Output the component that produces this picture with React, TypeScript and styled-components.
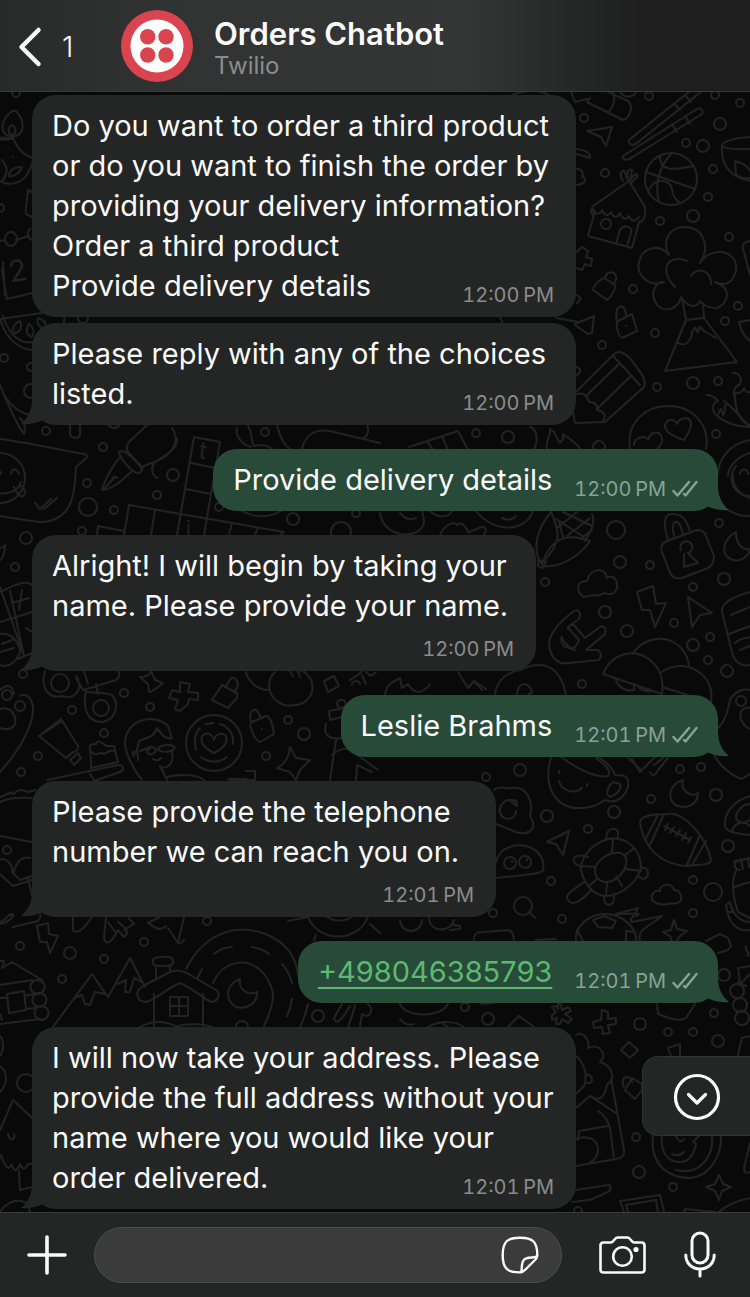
import React from "react";
import styled, { createGlobalStyle, css } from "styled-components";

const GlobalStyle = createGlobalStyle`
  *, *::before, *::after { box-sizing: border-box; }
  body {
    margin: 0;
    background: #090909;
    font-family: Inter, "Liberation Sans", sans-serif;
    color: #fafafa;
  }
`;

const colors = {
  panel: "#242625",
  line: "#3a3c3b",
  sent: "#274a39",
  wallpaper: "#090909",
  doodle: "#222222",
};

const Screen = styled.div`
  display: flex;
  flex-direction: column;
  min-height: 100vh;
`;

/* ---------- header ---------- */

const Header = styled.header`
  display: flex;
  align-items: center;
  height: 92px;
  padding: 0 18px;
  background: linear-gradient(90deg, #282929 0%, #313232 22%, #343535 62%, #252626 77%, #1e1e1e 86%);
  border-bottom: 1px solid #3a3a3a;
`;

const BackButton = styled.button`
  display: flex;
  align-items: center;
  gap: 20px;
  width: 103px;
  padding: 2px 0 0;
  border: 0;
  background: none;
  color: inherit;
  font: 300 29px/40px Inter, "Liberation Sans", sans-serif;
  cursor: pointer;
`;

const Contact = styled.div`
  display: flex;
  align-items: center;
  gap: 21px;
  min-width: 0;
`;

const ContactText = styled.div`
  padding-top: 4px;
`;

const ContactName = styled.h1`
  margin: 0;
  font-size: 31px;
  font-weight: 600;
  line-height: 36px;
  white-space: nowrap;
`;

const ContactStatus = styled.p`
  margin: 0;
  font-size: 24px;
  line-height: 28px;
  color: #8c8c8c;
`;

/* ---------- chat ---------- */

const Chat = styled.main`
  position: relative;
  flex: 1;
  padding: 3px 32px;
  background: ${colors.wallpaper};
  overflow: hidden;
`;

const WallpaperSvg = styled.svg`
  position: absolute;
  inset: 0;
  width: 100%;
  height: 100%;
`;

const MessageList = styled.ol`
  position: relative;
  display: flex;
  flex-direction: column;
  gap: 24px;
  margin: 0;
  padding: 0;
  list-style: none;
`;

const MessageGroup = styled.li`
  display: flex;
  flex-direction: column;
  gap: 6px;
`;

type Side = "received" | "sent";
type MetaPlacement = "corner" | "below" | "beside";

const Bubble = styled.article<{ $side: Side; $width?: number; $meta: MetaPlacement }>`
  position: relative;
  display: grid;
  align-self: ${(p) => (p.$side === "sent" ? "flex-end" : "flex-start")};
  width: ${(p) => (p.$width ? `${p.$width}px` : "auto")};
  max-width: 100%;
  padding: 11px 20px;
  border-radius: 24px;
  background: ${(p) => (p.$side === "sent" ? colors.sent : colors.panel)};
  ${(p) => p.$meta === "below" && css`row-gap: 12px;`}
  ${(p) => p.$meta === "beside" && css`
    grid-auto-flow: column;
    column-gap: 22px;
  `}
  ${(p) => p.$meta === "corner" && css`
    > * { grid-area: 1 / 1; }
  `}
`;

const MessageText = styled.p`
  margin: 0;
  font-size: 29px;
  line-height: 40px;
  white-space: pre-line;
`;

const PhoneLink = styled.a`
  color: #5cb971;
  text-decoration: underline;
  text-decoration-thickness: 2px;
  text-underline-offset: 5px;
  text-decoration-skip-ink: none;
`;

const Meta = styled.div<{ $side: Side }>`
  display: flex;
  align-items: center;
  gap: 6px;
  align-self: end;
  justify-self: end;
  padding-right: ${(p) => (p.$side === "sent" ? "0" : "2px")};
  font-size: 20px;
  font-variant-numeric: tabular-nums;
  line-height: 22px;
  white-space: nowrap;
  color: ${(p) => (p.$side === "sent" ? "#89a294" : "#8b8c8c")};
`;

const Tail = styled.svg<{ $side: Side }>`
  && { grid-area: auto; }
  position: absolute;
  bottom: 0;
  ${(p) => (p.$side === "sent" ? "right: -12px; transform: scaleX(-1);" : "left: -12px;")}
  fill: ${(p) => (p.$side === "sent" ? colors.sent : colors.panel)};
`;

const ScrollDownButton = styled.button`
  position: absolute;
  right: 0;
  bottom: 76px;
  display: flex;
  align-items: center;
  width: 108px;
  height: 80px;
  padding: 2px 0 0 30px;
  border: 1px solid #303231;
  border-right: 0;
  border-radius: 16px 0 0 16px;
  background: ${colors.panel};
  color: #ffffff;
  cursor: pointer;
`;

/* ---------- composer ---------- */

const Composer = styled.form`
  display: flex;
  align-items: center;
  padding: 14px 34px 14px 27px;
  border-top: 1px solid ${colors.line};
  background: ${colors.panel};
`;

const IconButton = styled.button`
  display: flex;
  flex: none;
  padding: 0;
  border: 0;
  background: none;
  color: #fafafa;
  cursor: pointer;
`;

const InputPill = styled.div`
  display: flex;
  flex: 1;
  align-items: center;
  min-width: 0;
  height: 56px;
  margin: 0 37px 0 27px;
  padding: 0 22px 0 24px;
  border: 1px solid #4c4d4d;
  border-radius: 28px;
  background: #3b3b3b;
`;

const MessageInput = styled.input`
  flex: 1;
  min-width: 0;
  border: 0;
  outline: 0;
  background: transparent;
  color: inherit;
  font: 400 29px/40px Inter, "Liberation Sans", sans-serif;
`;

const Tools = styled.div`
  display: flex;
  align-items: center;
  gap: 38px;
`;

/* ---------- icons ---------- */

const ChevronLeft = () => (
  <svg width="24" height="42" viewBox="0 0 24 42" fill="none" stroke="currentColor" strokeWidth="4.500" strokeLinecap="round" strokeLinejoin="round" aria-hidden="true">
    <path d="M20.500 4L3.500 21L20.500 38" />
  </svg>
);

const Avatar = () => (
  <svg width="72" height="72" viewBox="0 0 72 72" role="img" aria-label="Twilio">
    <circle cx="36" cy="36" r="36" fill="#d9444f" />
    <circle cx="36" cy="36" r="26.500" fill="#ffffff" />
    <g fill="#d9444f">
      <circle cx="26.700" cy="26.700" r="7.700" />
      <circle cx="45" cy="26.700" r="7.700" />
      <circle cx="26.700" cy="45" r="7.700" />
      <circle cx="45" cy="45" r="7.700" />
    </g>
  </svg>
);

const DoubleCheck = () => (
  <svg width="26" height="18" viewBox="0 0 26 18" fill="none" stroke="currentColor" strokeWidth="2.400" strokeLinecap="round" strokeLinejoin="round" aria-hidden="true">
    <path d="M1.500 11L5.500 15.500L17 2" />
    <path d="M12 14L13.500 15.500L24.500 2" />
  </svg>
);

const CircleDown = () => (
  <svg width="48" height="48" viewBox="0 0 48 48" fill="none" stroke="currentColor" strokeWidth="3.200" strokeLinecap="round" strokeLinejoin="round" aria-hidden="true">
    <circle cx="24" cy="24" r="21.500" />
    <path d="M15.500 21.500L24 30L32.500 21.500" />
  </svg>
);

const Plus = () => (
  <svg width="40" height="40" viewBox="0 0 40 40" stroke="currentColor" strokeWidth="3.600" strokeLinecap="round" aria-hidden="true">
    <path d="M20 2V38M2 20H38" />
  </svg>
);

const Sticker = () => (
  <svg width="38" height="38" viewBox="0 0 38 38" fill="none" stroke="currentColor" strokeWidth="2.400" strokeLinecap="round" strokeLinejoin="round" aria-hidden="true">
    <path d="M19.500 36.300C6 36.800 1.700 32 1.700 19C1.700 6 6 1.700 19 1.700C32 1.700 36.300 6 36.300 19C36.300 21.500 36 22 34.500 23.500L25 33C23 35 21.500 36.200 19.500 36.300Z" />
    <path d="M20.500 36C20.800 26 21 21.500 31 21.500C33.500 21.500 35 21.200 36 20" />
  </svg>
);

const Camera = () => (
  <svg width="47" height="38" viewBox="0 0 47 38" fill="none" stroke="currentColor" strokeWidth="2.600" strokeLinecap="round" strokeLinejoin="round" aria-hidden="true">
    <path d="M4.500 6.500H12C14.500 6.500 15.500 1.500 18.500 1.500H28.500C31.500 1.500 32.500 6.500 35 6.500H42.500C44.500 6.500 45.500 7.500 45.500 9.500V33.500C45.500 35.500 44.500 36.500 42.500 36.500H4.500C2.500 36.500 1.500 35.500 1.500 33.500V9.500C1.500 7.500 2.500 6.500 4.500 6.500Z" />
    <circle cx="23.500" cy="20.500" r="9.300" />
    <circle cx="37" cy="13.500" r="2.600" fill="currentColor" stroke="none" />
  </svg>
);

const Microphone = () => (
  <svg width="32" height="48" viewBox="0 0 32 48" fill="none" stroke="currentColor" strokeWidth="3" strokeLinecap="round" aria-hidden="true">
    <rect x="8" y="2" width="16" height="30" rx="8" />
    <path d="M1.800 24C1.800 32.500 8 38 16 38C24 38 30.200 32.500 30.200 24M16 38V45" />
  </svg>
);

/* ---------- wallpaper ---------- */

/* Loose dots scattered between the doodles: centre x, centre y, radius. */
const dots: number[][] = [
  [649, 96, 4], [715, 95, 4], [740, 103, 4], [584, 118, 4], [720, 124, 6], [686, 143, 4], [703, 146, 6],
  [605, 173, 4], [713, 169, 4], [708, 197, 4], [693, 216, 6], [660, 221, 4], [729, 237, 4], [633, 289, 4],
  [738, 306, 4], [725, 321, 4], [655, 333, 4], [602, 345, 4], [657, 387, 4], [693, 383, 6], [718, 381, 4],
  [716, 434, 4], [508, 437, 6], [599, 447, 6], [476, 433, 4], [576, 371, 4],
  [46, 431, 4], [103, 447, 4], [87, 483, 4], [88, 507, 9], [114, 510, 4], [173, 475, 6], [157, 495, 4],
  [219, 507, 4], [26, 538, 6], [82, 531, 4], [15, 567, 4], [265, 432, 4], [293, 519, 6], [341, 532, 10],
  [356, 513, 4], [114, 422, 6], [616, 530, 9], [719, 523, 4], [620, 562, 6], [650, 565, 4], [545, 582, 4],
  [724, 579, 6], [693, 587, 4], [605, 612, 6], [627, 631, 6], [674, 623, 4], [710, 637, 4], [693, 645, 6],
  [708, 660, 4], [727, 671, 6], [582, 684, 4], [741, 701, 5], [520, 770, 6], [486, 777, 4], [680, 769, 4],
  [701, 767, 4], [23, 674, 4], [124, 693, 4], [72, 710, 4], [104, 733, 4], [38, 756, 4], [21, 772, 4],
  [150, 707, 4], [288, 720, 4], [304, 734, 6], [266, 756, 4], [7, 850, 4], [207, 921, 4], [20, 946, 4],
  [70, 953, 6], [144, 942, 4], [104, 959, 4], [62, 979, 4], [318, 1016, 6], [7, 695, 5], [20, 706, 5],
  [547, 816, 6], [614, 812, 6], [651, 799, 4], [716, 795, 6], [588, 829, 4], [728, 846, 6], [551, 881, 4],
  [693, 880, 4], [713, 892, 9], [693, 913, 4], [493, 913, 4], [562, 919, 4], [724, 975, 6], [714, 1013, 4],
  [465, 1007, 4], [488, 1019, 6], [640, 1024, 6], [668, 1032, 4], [693, 1032, 4], [718, 1041, 6],
  [636, 1137, 4], [639, 1172, 6], [673, 1187, 4], [740, 1005, 7], [742, 1018, 7], [737, 991, 7],
  [578, 1211, 4], [26, 1083, 9], [4, 358, 4], [0, 208, 4], [16, 93, 4], [83, 318, 5], [31, 367, 4], [31, 391, 7],
];

const doodles: Record<string, string> = {
  candleBowl:
    "M12 111C6 116 1 123 3 130C5 138 18 139 22 130C24 122 20 115 16 111ZM12 135C8 134 7 127 12 125C17 128 16 134 12 135M0 139C8 141 12 139 12 136M13 138C18 150 24 156 34 158M0 138C4 137 8 138 12 139M13 157V157M0 181C8 186 20 184 26 176C30 170 32 166 33 160M2 160C8 168 8 172 3 180M9 176C10 168 16 167 22 167C20 173 14 177 9 176",
  drink: "M32 192L28 190C27 204 25 208 26 214L32 217",
  calendar: "M0 241L5 240M16 240L29 236M11 232A6 7 0 1 0 11 246A6 7 0 1 0 11 232M30 229C26 232 28 238 32 240M2 270C4 282 5 290 7 299L32 293M3 262L5 295",
  melon: "M0 319L70 309M0 319C8 345 24 352 44 350C56 346 64 330 65 314M3 316C10 338 22 344 33 342M20 321C12 324 12 332 15 333C21 332 22 326 20 321M29 324C25 330 27 336 32 337C35 332 33 327 29 324M38 318C36 326 42 329 46 327C46 322 42 319 38 318",
  fish: "M0 385C6 400 14 420 24 434C26 428 24 422 20 418M6 398C14 410 24 414 32 416",
  chatBubble: "M0 439C25 442 55 449 84 454C90 456 87 458 76 467C75 490 74 522 40 522C28 521 14 518 0 516M35 503L40 509L51 499M44 509L57 498",
  laughing: "M0 453A25 25 0 1 1 0 503M11 474C12 468 17 468 19 474M-8 472C-6 466 -1 467 1 474M-6 493C6 495 18 492 21 482M14 487C18 496 23 500 25 493C25 489 22 486 19 485",
  crossword:
    "M194 437L220 442L204 535M194 437L177 535M191 463L215 468M186 489L211 494M129 505L284 532M129 505L124 535M155 510L151 535M98 526L124 531M98 526L97 535M232 523L229 535M258 528L255 535M280 535L284 532",
  penNib: "M148 424L129 442C126 446 126 449 128 452L141 466M172 428C177 436 178 444 168 454C160 462 150 462 141 468M119 452C124 449 128 453 142 468C143 472 138 474 136 473C128 468 120 458 119 452M119 458C112 468 105 478 102 490C112 490 122 480 131 472M103 490L114 478M117 478A2 2 0 1 0 113 480M177 438C178 450 165 455 155 462C150 468 152 476 158 478M70 425V434C71 439 80 439 80 434V425",
  bubbleTop: "M237 428C234 438 246 446 251 447M248 426C253 434 251 444 254 446C262 443 270 447 272 449M277 425C280 438 284 445 290 449M302 449C305 434 316 429 330 431L380 443M367 425C370 432 366 438 362 439",
  keyboard: "M409 447L458 431L468 450M427 441L433 450M442 436L448 450M530 427C538 430 538 442 534 449M547 449C545 440 551 437 550 429C558 434 556 440 560 443C563 440 564 437 563 434C572 440 578 445 580 449",
  cylinder: "M512 95C530 88 542 90 550 96M571 92L575 102L587 99M590 98L587 102L623 120C630 118 634 106 628 101L604 90M613 92C616 100 612 108 609 112M620 92C624 98 634 98 636 92",
  arrowA: "M587 131L612 127L606 146L601 137Z",
  chopsticks: "M629 141C628 145 634 146 637 143L702 91M629 140L690 91M674 103L680 110M685 95L691 102M623 156C622 160 628 161 631 158L702 114C704 110 700 107 697 109ZM672 124L677 132M685 116L690 124",
  basketball:
    "M671 153A26 26 0 1 0 671 205A26 26 0 1 0 671 153M646 172L695 189M672 153C657 168 655 188 659 202M660 156C660 176 682 167 694 166M649 190C655 176 672 180 672 190C673 198 678 202 681 203",
  teaCup: "M750 137C738 138 722 140 722 146C727 150 740 149 750 149M722 146C720 168 734 178 750 181M735 161L736 175C742 179 750 178 750 178M735 161C744 164 748 166 750 171",
  hut:
    "M629 181L593 206C590 211 591 214 593 215M629 181L645 207C646 216 644 222 639 222M593 209C593 215 600 215 602 210C603 215 609 217 611 212C613 217 617 219 620 213C622 219 626 221 629 216C631 222 636 222 639 217M595 211L588 236L632 248L639 222M606 219A5 5 0 1 0 606 229A5 5 0 1 0 606 219M616 244L620 230C624 224 633 226 631 233L627 246M623 181C619 175 621 170 624 171L628 180C626 173 628 168 632 170L630 181C633 174 639 172 637 177L631 183M577 149C584 150 591 152 590 158L577 154M577 169C582 169 584 173 582 177M577 185C585 184 587 180 583 176",
  cross: "M577 252L582 247L588 251L586 257L592 259L591 266L585 264L582 270L577 268M577 295L581 299L577 303",
  jar: "M604 278L615 285C616 290 610 298 607 300L593 290C593 286 600 279 604 278M605 278C606 272 613 270 616 276C617 281 614 284 612 284",
  tree:
    "M664 282C648 288 636 274 639 262C642 247 660 243 669 255C661 240 670 227 685 227C703 227 711 246 700 263C712 245 738 250 736 270C733 285 724 286 715 282C733 288 728 304 717 308C704 308 700 301 700 301C695 310 687 306 681 297C678 312 656 316 653 294C654 287 657 283 662 282M675 287C658 270 668 253 687 261M691 276C696 267 711 269 711 284M682 298L686 320L704 318L703 303",
  volcano: "M686 320L665 371L737 362L704 318M678 343C684 346 690 344 692 333C696 322 695 331 698 332C701 322 701 330 704 331L716 338",
  bottle: "M750 241C745 242 740 244 744 252L750 275M750 320L739 322C741 333 746 338 750 341",
  wing: "M575 324L594 316L592 333L588 334L575 325M499 316L508 332M556 318L578 322",
  lock:
    "M618 321L632 314L637 331L622 338C618 336 615 324 618 321M617 321C615 311 617 307 621 306C626 307 626 314 626 317M626 326V326",
  pencil:
    "M573 412L575 423L605 422L644 387C646 382 644 378 641 373C635 366 629 353 619 352C616 352 614 354 612 356L577 391M613 356L640 385M619 364L586 396M631 376L597 409M577 394C584 392 588 397 589 402C596 402 598 406 597 410C604 411 607 416 603 421",
  loveFace: "M630 449C626 422 646 406 668 406C694 406 710 426 706 449M684 440C676 438 664 432 665 425C667 418 675 419 677 424C679 418 689 415 691 423C692 430 686 436 684 440M634 445C634 438 645 434 648 440C651 430 662 430 662 440C662 445 658 448 656 450",
  chilli: "M707 395C714 395 716 399 718 401C710 404 713 413 717 416C720 414 718 410 721 409L723 415C727 411 723 406 726 405M724 401C734 408 740 418 750 426M717 416C728 425 740 427 750 427M733 373C740 372 742 380 740 384C732 388 734 394 735 398C736 414 742 423 750 425M734 396C738 388 740 398 744 388C747 396 750 390 750 392",
  smileRight: "M750 440C726 444 718 464 718 473M733 475A22 22 0 0 0 750 498M740 474C742 467 747 469 748 474M736 466C726 480 734 495 750 496M728 510C738 516 744 516 750 516M750 453C736 457 728 468 728 476",
  dish: "M238 509C254 518 270 519 284 509M380 513C384 540 422 540 424 522C424 518 423 514 422 511M400 513C406 520 412 520 416 518M430 511C440 520 450 516 452 511M476 511C494 534 526 532 533 511M502 518C508 521 514 519 516 516",
  corn:
    "M551 512C536 530 533 548 540 562L544 566C560 568 580 556 590 541C580 538 568 534 556 542C548 548 544 558 542 564M551 512C560 532 562 542 543 562M538 560L546 562L543 568L538 566ZM559 522L563 537M592 514C596 524 590 532 585 541M556 519L584 537M563 512L592 526M577 512L557 528M590 518L567 536M592 530L580 539",
  padlock:
    "M668 540C662 520 665 513 674 514C684 515 687 522 690 531M674 536C672 526 673 521 677 522C681 524 681 528 683 534M662 552C660 546 662 543 667 541L697 530C702 530 705 532 706 536L714 556C714 562 712 566 708 568L682 578C676 579 673 578 670 573ZM681 550A6 6 0 1 1 688 553L698 563L684 567L684 554",
  moonA: "M736 532C722 540 720 556 733 560C742 562 748 556 750 550M736 532C736 545 742 550 750 549",
  cloud: "M584 597C575 592 577 580 587 581C590 568 605 566 607 578C614 574 618 581 617 588C614 596 610 594 604 593C598 598 592 594 588 596Z",
  bolt: "M637 592L653 586L656 604L666 603L655 627L650 610H642Z",
  arrowB: "M688 597L712 613L700 615L692 627Z",
  mitten: "M750 592C736 596 720 602 722 612L733 656C738 666 746 666 750 665M731 615L750 607M729 634L750 626M735 643C740 638 745 638 750 637M740 650L750 646",
  horns:
    "M568 627L579 619C582 612 578 609 574 611C562 620 549 633 549 645C551 660 560 665 569 663L599 660C603 655 600 651 597 650H586L605 634C607 628 604 625 600 627L585 638L574 625C570 624 568 627 568 629M562 637C560 642 563 646 566 647L575 650M568 628L579 640C576 648 571 650 569 647L561 638",
  handTop: "M440 535C444 526 453 520 457 525C461 521 466 526 468 532C474 532 484 522 486 530L484 535",
  parasol: "M603 674C612 652 635 648 650 660C660 668 664 680 662 694ZM633 653C652 628 686 638 689 666M662 672C684 656 716 674 711 702M662 687L688 695M616 680C618 688 628 692 634 690L634 684M639 687C640 690 646 692 652 691",
  vanish: "M495 695C496 680 508 672 520 670C542 660 560 664 566 695M517 695C518 680 530 682 532 692L528 695M458 672L468 688L474 681L486 689M474 681L482 690M385 695C386 685 392 682 400 678L402 688L408 684C414 694 422 695 430 684",
  couple: "M718 728C726 720 728 710 730 700C734 692 742 688 750 690M750 708C736 706 738 724 750 729M714 755C722 770 734 776 741 779L750 774",
  scooter:
    "M45 671C40 686 48 700 62 696C76 700 84 688 76 676M60 674A9 9 0 1 0 60 692A9 9 0 1 0 60 674M76 678L83 690L116 680C121 676 119 672 118 671M84 671L88 684M96 684L98 694M86 690C82 710 88 722 102 722C116 720 120 704 112 695C104 692 94 693 86 692M101 700A8 8 0 1 0 101 716A8 8 0 1 0 101 700",
  sparkleA: "M151 671L155 680L163 683L157 688C152 690 150 694 149 691L148 684L140 677C146 677 150 675 151 671",
  plusA: "M180 682L190 684L188 692L198 693V700L189 699L188 704L180 711L175 709L178 700L169 698L172 690L180 692Z",
  tag: "M222 685L237 693V698L228 708L212 700ZM226 686L231 678C236 677 239 682 237 688L234 693",
  vase: "M246 672C248 680 256 690 268 690M275 672C266 680 266 698 284 705C304 708 315 697 312 683C311 678 306 672 302 671M290 671L293 676M298 671L300 677M324 681L334 676L339 686L328 692ZM350 680L358 675L362 671M366 672L371 676L376 672M362 675L366 684M352 685C352 680 359 680 360 684",
  cup: "M39 736L61 719L78 746C79 749 76 752 73 752L66 758ZM42 734L62 721M70 760L78 753L81 758L74 765Z",
  cake: "M91 761L90 748C88 745 93 744 96 744C98 738 102 744 107 746L114 746L118 762L91 768ZM92 752C96 758 100 750 104 754C108 752 110 749 114 751M47 780L118 765C124 764 124 771 120 772L94 781M90 774L94 780",
  boy:
    "M142 780C132 768 125 752 125 742C126 720 154 712 168 726L172 738C164 740 160 732 157 728C154 738 146 738 139 741L136 754M134 756C131 752 134 750 138 754V760M140 751L148 748C154 744 160 752 152 754C146 755 146 750 150 748M158 749C160 744 173 744 175 747C172 754 160 752 158 749M172 752C174 762 170 768 160 768M160 766L167 780M153 759C156 761 159 760 161 758M167 777C180 774 196 774 204 780",
  loveCircle: "M214 715A28 28 0 1 0 214 771A28 28 0 1 0 214 715M214 753C204 748 200 742 202 736C206 732 212 733 214 740C216 733 222 732 226 736C228 742 224 748 214 753M206 724L213 723M220 724C228 726 234 734 233 744M196 750C193 738 196 732 200 728M201 757C208 763 220 763 227 757",
  bottleSm: "M252 722L266 716C270 716 272 722 274 734L260 742C254 740 253 732 250 726M251 724L250 716C251 709 256 708 258 712L261 718M262 729V729",
  sparkleB: "M290 747L296 758L310 760L302 768C298 772 297 778 296 780L290 772L277 768C286 764 289 756 290 747",
  sculpture: "M344 708C338 710 334 702 340 700C346 698 348 706 342 708M329 711L344 708L346 716L330 720ZM326 724C323 734 328 740 342 738M336 740L330 780M332 755C340 748 350 746 356 754L378 770M356 780L357 765L372 772M246 771H255V780H230M228 779H246",
  heartLeft: "M0 709C10 706 17 715 15 724C12 730 6 730 0 728M0 772C20 750 34 724 33 708C32 698 26 692 20 696M0 690C6 684 12 684 14 694",
  burger: "M0 797C6 796 10 790 14 794C18 788 24 790 28 792L36 790M0 802C12 796 24 798 32 798M0 836L32 842M0 860C6 856 14 866 12 872L20 880L32 876M14 872C16 862 22 856 30 858M0 874L13 886L32 880M0 924C10 922 16 914 12 914C8 914 4 922 0 922M13 927L38 921C42 916 40 914 40 915M28 878L32 896",
  coffee:
    "M552 755C540 790 560 810 580 808C592 808 600 804 605 800C620 806 630 790 628 780C626 774 620 776 615 775C612 766 600 756 590 754M560 756C580 772 600 778 608 776C612 770 604 764 596 758M613 782C606 788 606 795 610 797C618 794 622 788 620 784ZM559 771V773M587 784V786M559 781C562 792 576 794 582 788",
  stopwatchCloud: "M494 790C500 784 508 790 512 788C526 786 534 800 530 816C538 828 530 836 516 832L496 824M516 802C508 796 498 804 500 813C504 822 516 820 516 811M511 802L517 806L516 800",
  pac: "M496 862C500 846 516 844 526 846C540 850 545 860 543 870C542 874 530 874 496 878M510 857A6 6 0 1 0 510 869A6 6 0 1 0 510 857M525 856A6 6 0 1 0 525 868A6 6 0 1 0 525 856M512 861V862M527 859V861",
  magnifier: "M523 897A9 9 0 1 0 523 915A9 9 0 1 0 523 897M529 912L535 918",
  arrowC: "M547 842L569 831L563 855L556 844Z",
  turtle:
    "M608 839C590 844 580 860 581 870C584 884 594 896 606 896C622 896 640 880 641 866C640 850 628 836 608 839M615 853C604 854 594 864 595 872C596 880 604 884 612 881C622 876 628 866 626 858C624 854 620 852 615 853M606 839C606 828 616 826 618 832V839M613 840L612 853M634 848L624 856M641 871L626 869M616 876L622 886M607 883L606 896M598 878L589 886M581 866L595 867M580 866C572 864 572 856 578 856C582 855 586 856 588 857M641 868C650 866 650 878 643 879C640 878 638 876 637 876M584 882C574 890 564 894 568 900C574 908 584 898 591 890M604 896C604 908 612 906 614 900V894",
  moonB: "M683 780C668 784 666 802 678 806C690 810 698 802 698 793C690 798 680 790 683 780",
  football: "M640 823C640 816 650 814 668 814C684 812 706 836 711 860C710 866 700 864 686 866C660 864 644 848 640 823M658 815L645 840M664 814L650 845M700 835L687 865M706 841L692 865M664 826L690 840M668 824L665 830M674 827L670 833M680 830L676 836M686 833L682 840M691 837L688 843",
  sombrero: "M632 759L640 772L656 756M628 758L641 770M650 772C652 777 656 775 658 770L668 758M654 765L664 757",
  helmet: "M750 796C730 802 724 816 725 826C726 832 736 834 750 835M750 804C742 804 736 812 736 818C740 826 746 822 750 820M750 826C744 820 734 822 732 832",
  flask: "M734 862L750 858M736 860C733 866 736 870 740 870M741 859L743 869M748 858L749 867M736 871C730 884 734 900 738 912L750 918M734 887L750 882M726 905C728 922 736 932 750 930M726 905L730 902C732 914 740 922 750 922M728 912H733",
  cloudB: "M652 900C650 893 656 890 660 891C660 884 672 882 674 890C680 890 682 896 681 900C678 906 672 902 668 904C662 905 656 904 652 900",
  soccer: "M576 941C574 926 590 914 605 914C622 914 638 928 636 941M593 920L604 916L616 921L612 928L598 927ZM636 916C644 912 634 914 616 914M616 914L638 908C636 914 628 920 632 922L662 916C650 926 636 930 640 941M626 941V931L634 932M577 930L583 941",
  sparkleC: "M674 920L677 929L687 931L680 936L676 942M674 920L671 930L663 932L670 936L672 942",
  train: "M706 941L712 938L720 934L728 938L731 946L728 950L718 953M746 946C744 952 750 950 748 956M738 968L750 966M738 968L740 984L750 974M738 982L746 986M657 1004L658 1014C668 1018 678 1022 686 1018L695 1004",
  glasses: "M400 920A11 11 0 1 0 422 920M429 918C430 934 452 932 454 920M454 925L460 926V929L450 930M474 940C474 932 478 932 484 932L508 930C512 930 514 936 514 940M536 940L556 939",
  starA: "M561 1004L562 1010L568 1007L571 1011L565 1014L572 1019L568 1023L562 1019L560 1024H556L557 1018L552 1020L552 1015L556 1012L552 1007L556 1006L558 1009V1004Z",
  plusB: "M602 1010L608 1012V1019L616 1018V1024L608 1025L610 1033L603 1034L602 1027L594 1028L593 1022L601 1020Z",
  domes: "M400 1004C406 1018 440 1018 448 1004M428 1027C440 1020 456 1021 464 1027M442 1023L448 1027M400 1019C404 1024 408 1026 414 1024M508 1027L519 1016L534 1027M481 1004L494 1003",
  boltB: "M37 926L48 923L49 934L58 936L50 953L47 942H40Z",
  bow: "M73 917V930C76 934 82 932 92 917M106 917L104 938C105 944 110 946 118 930L124 937C130 932 126 928 118 922M124 930L134 924L128 917M108 922L116 933M148 923L160 917M148 923C156 928 160 932 166 926M178 943L184 917M168 928L178 943C180 944 183 942 184 940",
  logCabin:
    "M0 961H4L2 968L12 962L42 980M0 985L32 980M38 980A7 7 0 1 1 37 980M40 993A7 7 0 1 1 39 993M42 1006A7 7 0 1 1 41 1006M7 994L24 991L26 1010L9 1013ZM0 998H7M25 996L34 994M26 1009L35 1008M0 1024L40 1019M0 1014L2 1020",
  mountains: "M53 1027L92 974L108 997L130 958L145 987M74 998L82 995L85 1004L90 1005L95 992L106 994M118 984L126 980L125 992L130 992L134 978L142 982",
  house:
    "M154 994V1027M203 994V1027M138 997C136 992 138 989 145 985L170 972C178 969 186 972 192 976L216 990C221 994 218 1001 212 1002C206 1001 196 990 180 983C170 986 156 1000 146 1002C142 1002 139 1000 138 997M156 968V978M170 966V970M153 962C152 957 158 957 162 957C170 956 174 958 173 963C172 967 166 966 158 966C154 966 153 964 153 962M170 997H188V1016H170ZM179 997V1016M170 1006H188M140 1027C152 1020 164 1020 178 1027M178 1026C190 1023 204 1024 212 1027",
  road:
    "M186 969C206 930 240 922 270 936C290 946 297 960 298 976M213 983C222 962 248 954 264 974C276 990 276 1000 264 1026M197 979L202 969M214 954C220 949 226 947 232 947M252 947C258 948 264 950 269 954M282 964C288 970 290 976 292 983M292 999C291 1006 290 1010 287 1016M308 1004C306 1012 304 1020 300 1027M240 979C226 984 224 1000 236 1007C248 1010 258 1002 257 992C248 996 238 990 240 979M236 1027A6 6 0 0 1 248 1027",
  sun: "M288 921L308 917M308 917A32 30 0 0 0 368 917M327 917A20 16 0 0 0 352 917M370 924L380 933M316 935L314 941M368 1004C374 1010 370 1020 362 1014L360 1027M355 1005C352 1018 350 1022 348 1027M342 1004L334 1018C336 1026 342 1020 350 1006",
  leftTree: "M32 1118L13 1100L0 1130M8 1134C10 1142 16 1140 14 1134M0 1158C2 1150 2 1162 5 1164C10 1174 12 1160 12 1166C16 1176 20 1164 20 1164C26 1176 26 1160 32 1164M19 1171L20 1190L32 1187M0 1212C8 1200 20 1198 28 1204L30 1212M0 1036C4 1040 4 1050 0 1056M0 1066C8 1072 8 1084 0 1092",
  woman:
    "M576 1035C584 1030 590 1042 588 1048C600 1042 608 1056 600 1062C614 1066 614 1080 610 1082C604 1084 608 1094 600 1098C594 1100 592 1096 590 1096M576 1056C584 1062 588 1076 584 1086M586 1074C594 1076 594 1084 586 1083M584 1086L576 1094M576 1108L590 1096L616 1113M611 1078L624 1150C625 1156 622 1158 616 1159L576 1166M598 1111C606 1116 608 1122 610 1128L614 1159M578 1140L579 1131L608 1126M576 1139C588 1134 598 1140 598 1150C598 1156 594 1160 590 1163M576 1190L608 1185C612 1184 611 1190 608 1192L590 1200L572 1202",
  sparkleD: "M719 1175L723 1184L731 1187L722 1191L719 1200L715 1191L706 1187L715 1184Z",
  coin: "M653 1136C650 1160 664 1178 690 1178C712 1176 722 1152 721 1136M662 1136C660 1152 668 1162 680 1162C690 1162 694 1154 696 1144L693 1142L699 1136M712 1136C714 1156 700 1176 676 1170M672 1154C676 1156 680 1156 684 1152M676 1136C678 1142 682 1142 684 1139",
  frame: "M624 1212L620 1201L660 1195L664 1212M628 1212L626 1205L656 1200L658 1212M684 1212L685 1209L715 1212M719 1212C728 1204 740 1200 750 1198M750 1143L744 1168C744 1174 748 1173 750 1172",
  tokens: "M629 1042L638 1050L630 1058L621 1050ZM668 1048L680 1044V1056M668 1048L671 1056M738 1055L742 1038L750 1036M624 1087C620 1080 626 1074 630 1078L632 1082M625 1090L632 1078L642 1084V1090L635 1099Z",
  calculator: "M0 592C20 582 28 580 33 586M0 587L24 656M10 591L24 656M12 603L29 598M22 590L19 610M26 628L32 632M0 622L32 612M0 634C12 632 20 644 20 652C16 664 6 668 0 665M2 644L12 640M0 652L14 648M18 659L32 653M0 548C4 548 6 543 5 546C4 556 2 560 0 560",
};

const Wallpaper = () => (
  <WallpaperSvg aria-hidden="true">
    <defs>
      <pattern id="doodles" width="750" height="1121" patternUnits="userSpaceOnUse">
        <g transform="translate(0 -92)" fill="none" stroke={colors.doodle} strokeWidth="2" strokeLinecap="round" strokeLinejoin="round">
          {dots.map(([x, y, r]) => (
            <circle key={`${x}-${y}`} cx={x} cy={y} r={r} />
          ))}
          {Object.entries(doodles).map(([name, d]) => (
            <path key={name} d={d} />
          ))}
        </g>
      </pattern>
    </defs>
    <rect width="100%" height="100%" fill="url(#doodles)" />
    <g fill={colors.doodle} fontFamily="Inter, sans-serif">
      <text x="199" y="367" fontSize="24" transform="rotate(8 204 360)">t</text>
      <text x="186" y="443" fontSize="20">i</text>
      <text x="8" y="190" fontSize="30" transform="rotate(-10 14 178)">2</text>
    </g>
  </WallpaperSvg>
);

/* ---------- messages ---------- */

interface MessageProps {
  side?: Side;
  meta?: MetaPlacement;
  width?: number;
  time: string;
  tail?: boolean;
  children: React.ReactNode;
}

const Message = ({ side = "received", meta = "corner", width, time, tail = true, children }: MessageProps) => (
  <Bubble $side={side} $meta={meta} $width={width}>
    {tail && (
      <Tail $side={side} width="24" height="28" viewBox="0 0 24 28" aria-hidden="true">
        <path d="M12 2C12 14 8 21 1 27C8 28 16 26 22 23.500V2Z" />
      </Tail>
    )}
    <MessageText>{children}</MessageText>
    <Meta $side={side}>
      <time>{time}</time>
      {side === "sent" && <DoubleCheck />}
    </Meta>
  </Bubble>
);

export default function App() {
  return (
    <Screen>
      <GlobalStyle />
      <Header>
        <BackButton type="button" aria-label="Back, 1 unread chat">
          <ChevronLeft />
          <span>1</span>
        </BackButton>
        <Contact>
          <Avatar />
          <ContactText>
            <ContactName>Orders Chatbot</ContactName>
            <ContactStatus>Twilio</ContactStatus>
          </ContactText>
        </Contact>
      </Header>

      <Chat>
        <Wallpaper />
        <MessageList>
          <MessageGroup>
            <Message width={544} time={"12:00\u2009PM"} tail={false}>
              {"Do you want to order a third product\nor do you want to finish the order by\nproviding your delivery information?\nOrder a third product\nProvide delivery details"}
            </Message>
            <Message width={544} time={"12:00\u2009PM"}>
              {"Please reply with any of the choices\nlisted."}
            </Message>
          </MessageGroup>
          <MessageGroup>
            <Message side="sent" meta="beside" time={"12:00\u2009PM"}>
              Provide delivery details
            </Message>
          </MessageGroup>
          <MessageGroup>
            <Message width={504} meta="below" time={"12:00\u2009PM"}>
              {"Alright! I will begin by taking your\nname. Please provide your name."}
            </Message>
          </MessageGroup>
          <MessageGroup>
            <Message side="sent" meta="beside" time={"12:01\u2009PM"}>
              Leslie Brahms
            </Message>
          </MessageGroup>
          <MessageGroup>
            <Message width={464} meta="below" time={"12:01\u2009PM"}>
              {"Please provide the telephone\nnumber we can reach you on."}
            </Message>
          </MessageGroup>
          <MessageGroup>
            <Message side="sent" meta="beside" time={"12:01\u2009PM"}>
              <PhoneLink href="tel:+498046385793">+498046385793</PhoneLink>
            </Message>
          </MessageGroup>
          <MessageGroup>
            <Message width={544} time={"12:01\u2009PM"}>
              {"I will now take your address. Please\nprovide the full address without your\nname where you would like your\norder delivered."}
            </Message>
          </MessageGroup>
        </MessageList>
        <ScrollDownButton type="button" aria-label="Scroll to latest message">
          <CircleDown />
        </ScrollDownButton>
      </Chat>

      <Composer onSubmit={(e) => e.preventDefault()}>
        <IconButton type="button" aria-label="Attach">
          <Plus />
        </IconButton>
        <InputPill>
          <MessageInput type="text" aria-label="Message" />
          <IconButton type="button" aria-label="Stickers">
            <Sticker />
          </IconButton>
        </InputPill>
        <Tools>
          <IconButton type="button" aria-label="Camera">
            <Camera />
          </IconButton>
          <IconButton type="button" aria-label="Record voice message">
            <Microphone />
          </IconButton>
        </Tools>
      </Composer>
    </Screen>
  );
}
